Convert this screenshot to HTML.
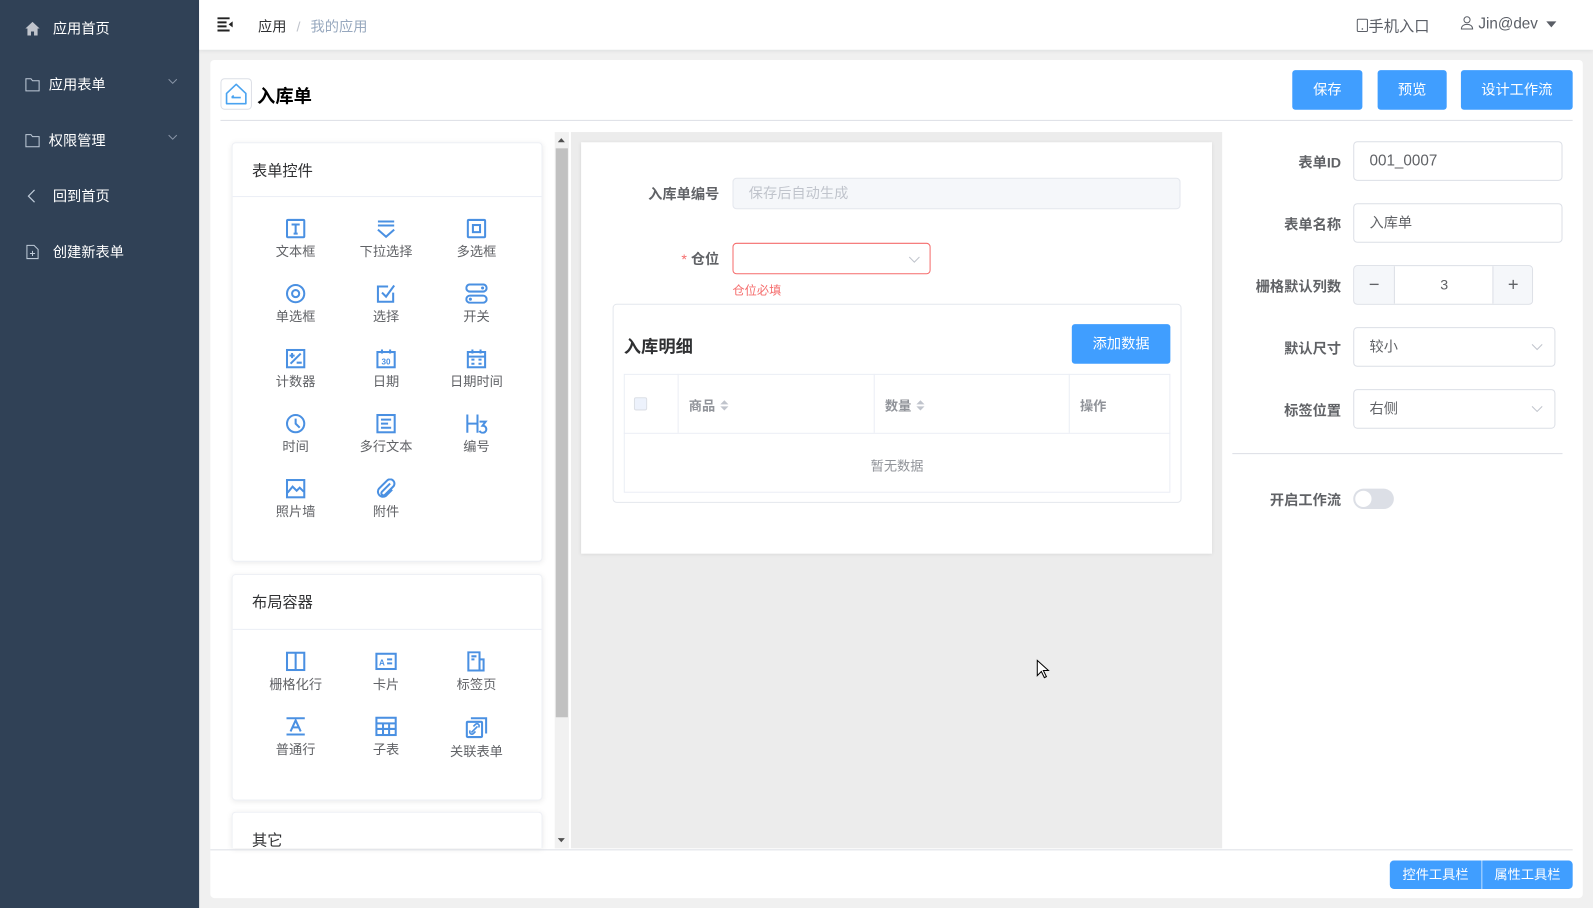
<!DOCTYPE html>
<html><head><meta charset="utf-8">
<style>
*{box-sizing:border-box;margin:0;padding:0}
html,body{width:1593px;height:908px;overflow:hidden;background:#f0f0f0}
body{font-family:"Liberation Sans","Noto Sans CJK SC",sans-serif;color:#606266}
#w{position:absolute;left:0;top:0;width:1568px;height:894px;transform:scale(1.01594);transform-origin:0 0;background:#f0f0f0}
.a{position:absolute}
.side{left:0;top:0;width:196px;height:894px;background:#304156}
.si{position:absolute;left:0;width:196px;color:#fff;font-size:14px;line-height:20px}
.si span{position:absolute;left:52px;top:0}
.si svg{position:absolute;left:24px;top:2px}
.chev{position:absolute;left:165px;top:3px}
.hdr{left:196px;top:0;width:1372px;height:49px;background:#fff;box-shadow:0 1px 4px rgba(0,21,41,.08)}
.card{left:207px;top:59px;width:1351px;height:825px;background:#fff;border-radius:4px}
.btn{position:absolute;background:#409eff;color:#fff;font-size:14px;text-align:center;border-radius:3px}
.pc{position:absolute;background:#fff;border-radius:4px;box-shadow:0 1px 6px rgba(0,0,0,.08);border:1px solid #eef0f5}
.pc .t{position:absolute;left:19px;font-size:15px;color:#303133}
.pc .hl{position:absolute;left:0;right:0;height:1px;background:#ebeef5}
.it{position:absolute;width:90px;text-align:center;font-size:13px;color:#606266}
.it svg{display:block;margin:0 auto 2px}
.lbl{position:absolute;font-size:14px;color:#606266;text-align:right;font-weight:bold}
.inp{position:absolute;border:1px solid #dcdfe6;border-radius:4px;background:#fff;font-size:14px;color:#606266;padding-left:15px}
</style></head><body><div id="w">
<div class="a side">
 <div class="si" style="top:18px"><svg width="16" height="16" viewBox="0 0 16 16"><path d="M1 8 8 1.5 15 8h-2v7H9.5v-4h-3v4H3V8z" fill="#c0c4cc"/></svg><span>应用首页</span></div>
 <div class="si" style="top:73px"><svg width="16" height="16" viewBox="0 0 16 16"><path d="M1.5 2.5h5l1.5 2h6.5v10h-13z" fill="none" stroke="#bfcbd9"/></svg><span style="left:48px">应用表单</span><svg class="chev" width="10" height="10" viewBox="0 0 10 10" style="left:165px"><path d="M1 3l4 4 4-4" fill="none" stroke="#8a96a8"/></svg></div>
 <div class="si" style="top:128px"><svg width="16" height="16" viewBox="0 0 16 16"><path d="M1.5 2.5h5l1.5 2h6.5v10h-13z" fill="none" stroke="#bfcbd9"/></svg><span style="left:48px">权限管理</span><svg class="chev" width="10" height="10" viewBox="0 0 10 10" style="left:165px"><path d="M1 3l4 4 4-4" fill="none" stroke="#8a96a8"/></svg></div>
 <div class="si" style="top:183px"><svg width="16" height="16" viewBox="0 0 16 16"><path d="M10 2 4 8l6 6" fill="none" stroke="#bfcbd9" stroke-width="1.2"/></svg><span>回到首页</span></div>
 <div class="si" style="top:238px"><svg width="16" height="16" viewBox="0 0 16 16"><path d="M2.5 1.5h7l4 4v9h-11z" fill="none" stroke="#bfcbd9"/><path d="M8 7v5M5.5 9.5h5" stroke="#bfcbd9"/></svg><span>创建新表单</span></div>
</div>
<div class="a hdr">
 <svg class="a" style="left:18px;top:17px" width="16" height="14" viewBox="0 0 16 14"><path d="M0 1h12M0 5h9M0 9h9M0 13h12" stroke="#222" stroke-width="2"/><path d="M11 7l4-3v6z" fill="#222"/></svg>
 <div class="a" style="left:58px;top:16px;font-size:14px;color:#303133">应用 <span style="color:#c0c4cc;margin:0 6px">/</span> <span style="color:#97a8be">我的应用</span></div>
 <div class="a" style="left:1139px;top:15px;font-size:15px;color:#5a5e66"><svg width="12" height="14" viewBox="0 0 12 14" style="vertical-align:-1px"><rect x="1" y="1" width="10" height="12" rx="1" fill="none" stroke="#5a5e66"/><circle cx="6" cy="10.5" r=".8" fill="#5a5e66"/></svg>手机入口</div>
 <div class="a" style="left:1241px;top:15px;font-size:15px;color:#5a5e66"><svg width="14" height="14" viewBox="0 0 14 14" style="vertical-align:-1px"><circle cx="7" cy="4.5" r="3" fill="none" stroke="#5a5e66"/><path d="M1.5 13.5c0-3 2.5-4.5 5.5-4.5s5.5 1.5 5.5 4.5z" fill="none" stroke="#5a5e66"/></svg> Jin@dev <svg width="10" height="8" viewBox="0 0 10 8" style="margin-left:4px"><path d="M0 1h10L5 7z" fill="#5a5e66"/></svg></div>
</div>
<div class="a card"></div>
<div class="a" style="left:217px;top:77px;width:31px;height:31px;border:1px solid #dcdfe6;border-radius:4px"><svg width="29" height="29" viewBox="0 0 29 29"><path d="M5 14 14.5 5 24 14v10H5z" fill="none" stroke="#4aa3f0" stroke-width="1.6" stroke-linejoin="round"/><path d="M10 18h9M10 18l2-2" fill="none" stroke="#4aa3f0" stroke-width="1.6"/></svg></div>
<div class="a" style="left:253px;top:81px;font-size:18px;font-weight:bold;color:#000">入库单</div>
<div class="btn" style="left:1272px;top:69px;width:69px;height:39px;line-height:39px">保存</div>
<div class="btn" style="left:1356px;top:69px;width:68px;height:39px;line-height:39px">预览</div>
<div class="btn" style="left:1438px;top:69px;width:110px;height:39px;line-height:39px">设计工作流</div>
<div class="a" style="left:217px;top:118px;width:1331px;height:1px;background:#dcdfe6"></div>
<!-- scroll area -->
<div class="a" style="left:546px;top:130px;width:14px;height:705px;background:#f1f1f1"></div>
<div class="a" style="left:547px;top:146px;width:12px;height:560px;background:#c1c1c1"></div>
<svg class="a" style="left:549px;top:135px" width="8" height="6"><path d="M0 5h7L3.5 1z" fill="#505050"/></svg>
<svg class="a" style="left:549px;top:824px" width="8" height="6"><path d="M0 1h7L3.5 5z" fill="#505050"/></svg>
<!-- card 1 -->
<div class="pc" style="left:228px;top:140px;width:306px;height:413px">
 <div class="t" style="top:16px">表单控件</div><div class="hl" style="top:52px"></div>
</div>
<div class="pc" style="left:228px;top:565px;width:306px;height:223px">
 <div class="t" style="top:16px">布局容器</div><div class="hl" style="top:53px"></div>
</div>
<div class="pc" style="left:228px;top:799px;width:306px;height:36px;border-bottom:none;border-radius:4px 4px 0 0">
 <div class="t" style="top:16px">其它</div>
</div>
<!-- items -->
<div id="items"></div>
<div class="it" style="left:246px;top:215px"><svg width="20" height="20" viewBox="0 0 20 20"><rect x="1.5" y="1.5" width="17" height="17" rx="1" fill="none" stroke="#4a90e2" stroke-width="2"/><path d="M6 6h8M10 6v9M8 15h4" stroke="#4a90e2" stroke-width="2"/></svg>文本框</div>
<div class="it" style="left:335px;top:215px"><svg width="20" height="20" viewBox="0 0 20 20"><path d="M2 3h16M2 7h16M2 11l8 7 8-7" fill="none" stroke="#4a90e2" stroke-width="2"/></svg>下拉选择</div>
<div class="it" style="left:424px;top:215px"><svg width="20" height="20" viewBox="0 0 20 20"><rect x="1.5" y="1.5" width="17" height="17" rx="1" fill="none" stroke="#4a90e2" stroke-width="2"/><rect x="6.5" y="6.5" width="7" height="7" fill="none" stroke="#4a90e2" stroke-width="2"/></svg>多选框</div>
<div class="it" style="left:246px;top:279px"><svg width="20" height="20" viewBox="0 0 20 20"><circle cx="10" cy="10" r="8.5" fill="none" stroke="#4a90e2" stroke-width="2"/><circle cx="10" cy="10" r="3.5" fill="none" stroke="#4a90e2" stroke-width="2"/></svg>单选框</div>
<div class="it" style="left:335px;top:279px"><svg width="20" height="20" viewBox="0 0 20 20"><path d="M17 9v9H2V3h10" fill="none" stroke="#4a90e2" stroke-width="2"/><path d="M6 9l4 4 8-11" fill="none" stroke="#4a90e2" stroke-width="2"/></svg>选择</div>
<div class="it" style="left:424px;top:279px"><svg width="22" height="20" viewBox="0 0 22 20"><rect x="1" y="1" width="20" height="7" rx="3.5" fill="none" stroke="#4a90e2" stroke-width="2"/><rect x="1" y="12" width="20" height="7" rx="3.5" fill="none" stroke="#4a90e2" stroke-width="2"/><circle cx="17" cy="4.5" r="1.5" fill="#4a90e2"/><circle cx="5" cy="15.5" r="1.5" fill="#4a90e2"/></svg>开关</div>
<div class="it" style="left:246px;top:343px"><svg width="20" height="20" viewBox="0 0 20 20"><rect x="1.5" y="1.5" width="17" height="17" fill="none" stroke="#4a90e2" stroke-width="2"/><path d="M4 7h5M6.5 4.5v5M5 15 15 5M11 14h5" stroke="#4a90e2" stroke-width="2"/></svg>计数器</div>
<div class="it" style="left:335px;top:343px"><svg width="20" height="20" viewBox="0 0 20 20"><rect x="1.5" y="3.5" width="17" height="15" fill="none" stroke="#4a90e2" stroke-width="2"/><path d="M6 1v4M14 1v4" stroke="#4a90e2" stroke-width="2"/><text x="10" y="16" font-size="8" font-weight="bold" text-anchor="middle" fill="#4a90e2" font-family="Liberation Sans">30</text></svg>日期</div>
<div class="it" style="left:424px;top:343px"><svg width="20" height="20" viewBox="0 0 20 20"><rect x="1.5" y="3.5" width="17" height="15" fill="none" stroke="#4a90e2" stroke-width="2"/><path d="M6 1v4M14 1v4M2 8h16M5 11h3M12 11h3M5 15h3M12 15h3" stroke="#4a90e2" stroke-width="2"/></svg>日期时间</div>
<div class="it" style="left:246px;top:407px"><svg width="20" height="20" viewBox="0 0 20 20"><circle cx="10" cy="10" r="8.5" fill="none" stroke="#4a90e2" stroke-width="2"/><path d="M10 5v5l4 4" fill="none" stroke="#4a90e2" stroke-width="2"/></svg>时间</div>
<div class="it" style="left:335px;top:407px"><svg width="20" height="20" viewBox="0 0 20 20"><rect x="1.5" y="1.5" width="17" height="17" fill="none" stroke="#4a90e2" stroke-width="2"/><path d="M5 6h10M5 10h7M5 14h10" stroke="#4a90e2" stroke-width="2"/></svg>多行文本</div>
<div class="it" style="left:424px;top:407px"><svg width="22" height="20" viewBox="0 0 22 20"><path d="M2 1v18M12 1v18M2 10h10" stroke="#4a90e2" stroke-width="2"/><path d="M14 8h6l-3 4a3.5 3.5 0 1 1-3 5" fill="none" stroke="#4a90e2" stroke-width="2"/></svg>编号</div>
<div class="it" style="left:246px;top:471px"><svg width="20" height="20" viewBox="0 0 20 20"><rect x="1.5" y="1.5" width="17" height="17" fill="none" stroke="#4a90e2" stroke-width="2"/><path d="M2 14l5-6 4 4 3-3 4 4" fill="none" stroke="#4a90e2" stroke-width="2"/></svg>照片墙</div>
<div class="it" style="left:335px;top:471px"><svg width="20" height="20" viewBox="0 0 20 20"><path d="M14 5 6 13a2 2 0 0 0 3 3l8-8a4 4 0 0 0-6-6L3 10a5 5 0 0 0 7 7l6-6" fill="none" stroke="#4a90e2" stroke-width="2"/></svg>附件</div>
<div class="it" style="left:246px;top:641px"><svg width="20" height="20" viewBox="0 0 20 20"><rect x="1.5" y="1.5" width="17" height="17" fill="none" stroke="#4a90e2" stroke-width="2"/><path d="M10 2v16" stroke="#4a90e2" stroke-width="2"/></svg>栅格化行</div>
<div class="it" style="left:335px;top:641px"><svg width="22" height="20" viewBox="0 0 22 20"><rect x="1.5" y="2.5" width="19" height="15" fill="none" stroke="#4a90e2" stroke-width="2"/><text x="7" y="14" font-size="8" font-weight="bold" text-anchor="middle" fill="#4a90e2" font-family="Liberation Sans">A</text><path d="M12 8h5M12 12h5" stroke="#4a90e2" stroke-width="2"/></svg>卡片</div>
<div class="it" style="left:424px;top:641px"><svg width="20" height="20" viewBox="0 0 20 20"><path d="M2 1h11v18H2z M13 8h4v11h-4" fill="none" stroke="#4a90e2" stroke-width="2"/><path d="M5 5h5M5 8h3" stroke="#4a90e2" stroke-width="2"/></svg>标签页</div>
<div class="it" style="left:246px;top:705px"><svg width="20" height="20" viewBox="0 0 20 20"><path d="M1 2h18M1 18h18M5 15l5-11 5 11M7 11h6" fill="none" stroke="#4a90e2" stroke-width="2"/></svg>普通行</div>
<div class="it" style="left:335px;top:705px"><svg width="22" height="20" viewBox="0 0 22 20"><rect x="1.5" y="1.5" width="19" height="17" fill="none" stroke="#4a90e2" stroke-width="2"/><path d="M2 7h18M2 12.5h18M8 7v11M14 7v11" stroke="#4a90e2" stroke-width="2"/></svg>子表</div>
<div class="it" style="left:424px;top:705px"><svg width="22" height="22" viewBox="0 0 22 22"><rect x="1.5" y="5.5" width="15" height="15" rx="1" fill="none" stroke="#4a90e2" stroke-width="2"/><path d="M5.5 2h15v15" fill="none" stroke="#4a90e2" stroke-width="2"/><path d="M6 16l6-6M8 10l2-2a2 2 0 0 1 3 3M10 15l-2 2a2 2 0 0 1-3-3" fill="none" stroke="#4a90e2" stroke-width="1.6"/></svg>关联表单</div>
<!-- canvas -->
<div class="a" style="left:562px;top:130px;width:641px;height:705px;background:#ececec"></div>
<div class="a" style="left:572px;top:140px;width:621px;height:405px;background:#fff;box-shadow:0 1px 4px rgba(0,0,0,.1)"></div>
<div class="lbl" style="left:600px;top:181px;width:108px">入库单编号</div>
<div class="inp" style="left:721px;top:175px;width:441px;height:31px;background:#f5f7fa;border-color:#e4e7ed;color:#c0c4cc;line-height:29px">保存后自动生成</div>
<div class="lbl" style="left:600px;top:245px;width:108px"><span style="color:#f56c6c;font-weight:normal">* </span>仓位</div>
<div class="inp" style="left:721px;top:239px;width:195px;height:31px;border-color:#f56c6c"><svg class="a" style="left:172px;top:12px" width="12" height="8" viewBox="0 0 12 8"><path d="M1 1l5 5 5-5" fill="none" stroke="#c0c4cc"/></svg></div>
<div class="a" style="left:721px;top:277px;font-size:12px;color:#f56c6c">仓位必填</div>
<div class="a" style="left:603px;top:299px;width:560px;height:196px;border:1px solid #e4e7ed;border-radius:4px"></div>
<div class="a" style="left:614px;top:327px;font-size:17px;font-weight:bold;color:#303133">入库明细</div>
<div class="btn" style="left:1055px;top:319px;width:97px;height:39px;line-height:39px">添加数据</div>
<div class="a" style="left:614px;top:368px;width:538px;height:117px;border:1px solid #ebeef5"></div>
<div class="a" style="left:614px;top:426px;width:538px;height:1px;background:#ebeef5"></div>
<div class="a" style="left:667px;top:368px;width:1px;height:58px;background:#ebeef5"></div>
<div class="a" style="left:860px;top:368px;width:1px;height:58px;background:#ebeef5"></div>
<div class="a" style="left:1052px;top:368px;width:1px;height:58px;background:#ebeef5"></div>
<div class="a" style="left:624px;top:391px;width:13px;height:13px;border:1px solid #dcdfe6;border-radius:2px;background:#edf2fc"></div>
<div class="a" style="left:678px;top:389px;font-size:13px;font-weight:bold;color:#909399">商品 <svg width="10" height="14" viewBox="0 0 10 14" style="vertical-align:-2px"><path d="M1 6l4-4 4 4zM1 8l4 4 4-4z" fill="#c0c4cc"/></svg></div>
<div class="a" style="left:871px;top:389px;font-size:13px;font-weight:bold;color:#909399">数量 <svg width="10" height="14" viewBox="0 0 10 14" style="vertical-align:-2px"><path d="M1 6l4-4 4 4zM1 8l4 4 4-4z" fill="#c0c4cc"/></svg></div>
<div class="a" style="left:1063px;top:389px;font-size:13px;font-weight:bold;color:#909399">操作</div>
<div class="a" style="left:614px;top:448px;width:538px;text-align:center;font-size:13px;color:#909399">暂无数据</div>
<!-- right panel -->
<div class="lbl" style="left:1213px;top:150px;width:107px">表单ID</div>
<div class="inp" style="left:1332px;top:139px;width:206px;height:39px;line-height:37px;font-size:15px">001_0007</div>
<div class="lbl" style="left:1213px;top:211px;width:107px">表单名称</div>
<div class="inp" style="left:1332px;top:200px;width:206px;height:39px;line-height:37px">入库单</div>
<div class="lbl" style="left:1213px;top:272px;width:107px">栅格默认列数</div>
<div class="inp" style="left:1332px;top:261px;width:177px;height:39px;padding:0;overflow:hidden">
 <div class="a" style="left:0;top:0;width:40px;height:37px;background:#f5f7fa;border-right:1px solid #dcdfe6;text-align:center;line-height:36px;font-size:18px;color:#606266">−</div>
 <div class="a" style="left:40px;top:0;width:97px;height:37px;text-align:center;line-height:37px;font-size:14px">3</div>
 <div class="a" style="left:136px;top:0;width:40px;height:37px;background:#f5f7fa;border-left:1px solid #dcdfe6;text-align:center;line-height:36px;font-size:18px;color:#606266">+</div>
</div>
<div class="lbl" style="left:1213px;top:333px;width:107px">默认尺寸</div>
<div class="inp" style="left:1332px;top:322px;width:199px;height:39px;line-height:37px">较小<svg class="a" style="left:174px;top:15px" width="12" height="8" viewBox="0 0 12 8"><path d="M1 1l5 5 5-5" fill="none" stroke="#c0c4cc"/></svg></div>
<div class="lbl" style="left:1213px;top:394px;width:107px">标签位置</div>
<div class="inp" style="left:1332px;top:383px;width:199px;height:39px;line-height:37px">右侧<svg class="a" style="left:174px;top:15px" width="12" height="8" viewBox="0 0 12 8"><path d="M1 1l5 5 5-5" fill="none" stroke="#c0c4cc"/></svg></div>
<div class="a" style="left:1213px;top:446px;width:325px;height:1px;background:#dcdfe6"></div>
<div class="lbl" style="left:1213px;top:482px;width:107px">开启工作流</div>
<div class="a" style="left:1332px;top:481px;width:40px;height:20px;border-radius:10px;background:#dcdfe6"><div class="a" style="left:2px;top:2px;width:16px;height:16px;border-radius:50%;background:#fff"></div></div>
<!-- bottom -->
<div class="a" style="left:207px;top:836px;width:1341px;height:1px;background:#dcdfe6"></div>
<div class="btn" style="left:1368px;top:847px;width:90px;height:28px;line-height:28px;font-size:13px;border-radius:4px 0 0 4px">控件工具栏</div>
<div class="btn" style="left:1459px;top:847px;width:89px;height:28px;line-height:28px;font-size:13px;border-radius:0 4px 4px 0">属性工具栏</div>
<div class="a" style="left:1458px;top:847px;width:1px;height:28px;background:#8cc5ff"></div>
<svg class="a" style="left:1020px;top:649px" width="14" height="20" viewBox="0 0 14 20"><path d="M1 1v15l4-4 3 6 2-1-3-6h5z" fill="#fff" stroke="#000"/></svg>
</div></body></html>
